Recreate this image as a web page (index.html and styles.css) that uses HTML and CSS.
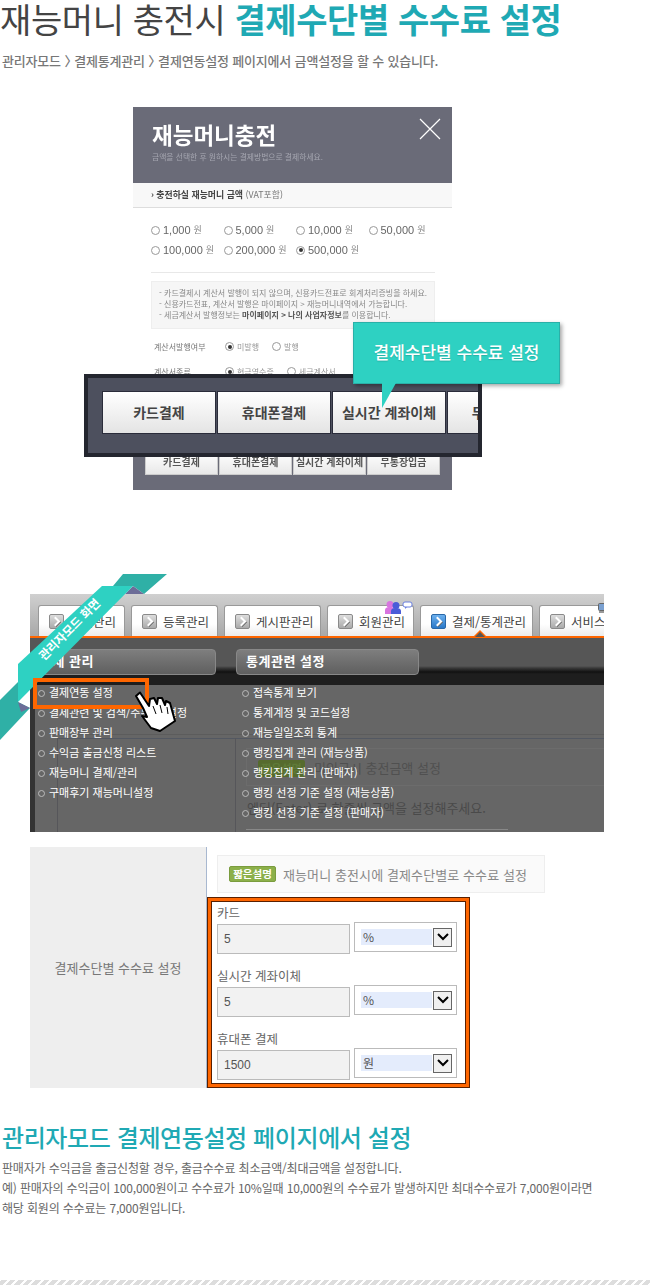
FILE: index.html
```html
<!DOCTYPE html>
<html lang="ko">
<head>
	<meta charset="UTF-8">
	<title>결제수단별 수수료 설정</title>
	<link rel="stylesheet" href="styles.css">
</head>
<body>
	<header class="top">
		<h1>재능머니 충전시 <strong>결제수단별 수수료 설정</strong></h1>
		<p class="crumb">관리자모드 <i>〉</i> 결제통계관리 <i>〉</i> 결제연동설정 페이지에서 금액설정을 할 수 있습니다.</p>
	</header>

	<section class="shot">
		<div class="modal">
			<div class="modal-head">
				<h2>재능머니충전</h2>
				<p>금액을 선택한 후 원하시는 결제방법으로 결제하세요.</p>
				<svg class="close" width="22" height="22" viewBox="0 0 22 22"><path d="M1 1L21 21M21 1L1 21" stroke="#fff" stroke-width="1.2" fill="none"/></svg>
			</div>
			<div class="modal-bar"><b>› 충전하실 재능머니 금액</b> (VAT포함)</div>
			<div class="amounts">
				<label><i class="radio"></i>1,000 <em>원</em></label>
				<label><i class="radio"></i>5,000 <em>원</em></label>
				<label><i class="radio"></i>10,000 <em>원</em></label>
				<label><i class="radio"></i>50,000 <em>원</em></label>
				<label><i class="radio"></i>100,000 <em>원</em></label>
				<label><i class="radio"></i>200,000 <em>원</em></label>
				<label><i class="radio on"></i>500,000 <em>원</em></label>
			</div>
			<div class="note">
				<p>- 카드결제시 계산서 발행이 되지 않으며, 신용카드전표로 회계처리증빙을 하세요.</p>
				<p>- 신용카드전표, 계산서 발행은 마이페이지 &gt; 재능머니내역에서 가능합니다.</p>
				<p>- 세금계산서 발행정보는 <b>마이페이지 &gt; 나의 사업자정보</b>를 이용합니다.</p>
			</div>
			<div class="opt">
				<span class="opt-name">계산서발행여부</span>
				<label class="opt-a"><i class="radio on"></i>미발행</label>
				<label><i class="radio"></i>발행</label>
			</div>
			<div class="opt">
				<span class="opt-name">계산서종류</span>
				<label class="opt-a"><i class="radio on"></i>현금영수증</label>
				<label><i class="radio"></i>세금계산서</label>
			</div>
			<div class="modal-foot">
				<span>카드결제</span><span>휴대폰결제</span><span>실시간 계좌이체</span><span>무통장입금</span>
			</div>
		</div>

		<div class="zoombox">
			<span>카드결제</span><span>휴대폰결제</span><span>실시간 계좌이체</span><span>무통장입금</span>
		</div>
		<div class="callout">결제수단별 수수료 설정</div>
	</section>

	<section class="admin-wrap">
		<div class="admin">
			<nav class="tabs">
				<a class="tab t1"><i class="tico"></i>결제관리</a>
				<a class="tab t2"><i class="tico"></i>등록관리</a>
				<a class="tab t3"><i class="tico"></i>게시판관리</a>
				<a class="tab t4"><i class="tico"></i>회원관리
					<svg class="people" width="28" height="13" viewBox="0 0 28 13">
						<circle cx="5" cy="3.5" r="3.5" fill="#d874e0"/><path d="M0 13V9Q0 6 5 6T10 9V13Z" fill="#d874e0"/>
						<circle cx="11" cy="4.5" r="3.5" fill="#4a5cd8"/><path d="M6 13V10Q6 7 11 7T16 10V13Z" fill="#4a5cd8"/>
						<rect x="18" y="1" width="9" height="5" rx="2" fill="#fff" stroke="#6a80e0"/><path d="M20 6V8L22 6Z" fill="#6a80e0"/>
					</svg>
				</a>
				<a class="tab t5 active"><i class="tico"></i>결제/통계관리<b class="notch"></b></a>
				<a class="tab t6"><i class="tico"></i>서비스관리
					<svg class="monitor" width="16" height="10" viewBox="0 0 16 10"><rect x="0.5" y="0.5" width="14" height="7" rx="1" fill="#7aa0d0" stroke="#666"/><rect x="1" y="8" width="13" height="2" fill="#999"/></svg>
				</a>
			</nav>
			<div class="heads">
				<div class="head h1st">결제 관리</div>
				<div class="head h2nd">통계관련 설정</div>
			</div>
			<div class="menu">
				<div class="ghost">
					<i class="gh g-line1"></i>
					<i class="gh g-line2"></i>
					<i class="gh g-v1"></i>
					<i class="gh g-v2"></i>
					<div class="g-box"><b>짧은설명</b>미입금시 충전금액 설정</div>
					<p class="g-text">엔터(Enter) 로 한줄씩 금액을 설정해주세요.</p>
					<i class="gh g-input"></i>
				</div>
				<ul class="mcol m1">
					<li>결제연동 설정</li>
					<li>결제관련 및 검색/주문 등 설정</li>
					<li>판매장부 관리</li>
					<li>수익금 출금신청 리스트</li>
					<li>재능머니 결제/관리</li>
					<li>구매후기 재능머니설정</li>
				</ul>
				<ul class="mcol m2">
					<li>접속통계 보기</li>
					<li>통계계정 및 코드설정</li>
					<li>재능일일조회 통계</li>
					<li>랭킹집계 관리 (재능상품)</li>
					<li>랭킹집계 관리 (판매자)</li>
					<li>랭킹 선정 기준 설정 (재능상품)</li>
					<li>랭킹 선정 기준 설정 (판매자)</li>
				</ul>
			</div>
		</div>

		<svg class="ribbon" width="200" height="180" viewBox="0 565 200 180">
			<path d="M123 574H167L144 594L133 586H113Z" fill="#2fb0a6"/>
			<path d="M125 594H144L133 586Z" fill="#6d6d98"/>
			<path d="M0 700L18 682V702L30 708L0 740Z" fill="#2fb0a6"/>
			<path d="M18 702L30 708L21 712Z" fill="#6d6d98"/>
			<path d="M102 586H133L18 702V664Z" fill="#2ed1c2"/>
			<text x="0" y="0" transform="translate(44 661) rotate(-45)" class="ribbon-text">관리자모드 화면</text>
			<rect x="35" y="680" width="112" height="27" fill="none" stroke="#f60" stroke-width="4"/>
			<path d="M136 696L140 692.500L149 706L150 699L154 698L157 704L158 698L162 698L165 705L166 701L170 703L175 721L160 731L151 728L142 716L147 717L143 708Z" fill="#fff" stroke="#000" stroke-width="2" stroke-linejoin="round"/>
			<path d="M153 706L156 714M160 705L162 713M167 707L168 714" stroke="#000" stroke-width="1" fill="none"/>
		</svg>
	</section>

	<section class="form">
		<div class="form-name">결제수단별 수수료 설정</div>
		<div class="form-body">
			<div class="desc"><b class="badge">짧은설명</b>재능머니 충전시에 결제수단별로 수수료 설정</div>
			<div class="fields">
				<div class="field">
					<label>카드</label>
					<div class="field-row"><div class="input">5</div><div class="sel"><span>%</span><i class="sel-btn"><svg width="12" height="8" viewBox="0 0 12 8"><path d="M1 1L6 6L11 1" stroke="#000" stroke-width="2" fill="none"/></svg></i></div></div>
				</div>
				<div class="field">
					<label>실시간 계좌이체</label>
					<div class="field-row"><div class="input">5</div><div class="sel"><span>%</span><i class="sel-btn"><svg width="12" height="8" viewBox="0 0 12 8"><path d="M1 1L6 6L11 1" stroke="#000" stroke-width="2" fill="none"/></svg></i></div></div>
				</div>
				<div class="field">
					<label>휴대폰 결제</label>
					<div class="field-row"><div class="input">1500</div><div class="sel"><span>원</span><i class="sel-btn"><svg width="12" height="8" viewBox="0 0 12 8"><path d="M1 1L6 6L11 1" stroke="#000" stroke-width="2" fill="none"/></svg></i></div></div>
				</div>
			</div>
		</div>
	</section>

	<section class="foot-text">
		<h3>관리자모드 결제연동설정 페이지에서 설정</h3>
		<p>판매자가 수익금을 출금신청할 경우, 출금수수료 최소금액/최대금액을 설정합니다.</p>
		<p>예) 판매자의 수익금이 100,000원이고 수수료가 10%일때 10,000원의 수수료가 발생하지만 최대수수료가 7,000원이라면</p>
		<p>해당 회원의 수수료는 7,000원입니다.</p>
	</section>

	<div class="stripes"></div>
</body>
</html>
```

FILE: styles.css
```css
* {
	box-sizing: border-box;
}
html, body {
	margin: 0;
	padding: 0;
}
body {
	width: 650px;
	height: 1285px;
	overflow: hidden;
	display: flex;
	flex-direction: column;
	background: #fff;
	font-family: "Noto Sans CJK KR", "Noto Sans", sans-serif;
	color: #444;
}
p, h1, h2, h3, ul {
	margin: 0;
	padding: 0;
}
i, em {
	font-style: normal;
}

/* title */
.top {
	height: 107px;
	flex: none;
}
h1 {
	font-size: 34px;
	line-height: 38px;
	font-weight: 400;
	letter-spacing: -0.4px;
	color: #444;
	white-space: nowrap;
}
h1 strong {
	font-weight: 700;
	color: #1fa9b4;
}
.crumb {
	margin-top: 14px;
	padding-left: 2px;
	font-size: 13px;
	line-height: 18px;
	font-weight: 500;
	letter-spacing: -0.18px;
	color: #777;
	white-space: nowrap;
}
.crumb i {
	display: inline-block;
	margin-right: -6.500px;
}

/* payment popup */
.shot {
	position: relative;
	height: 383px;
	flex: none;
}
.modal {
	width: 319px;
	height: 383px;
	margin-left: 133px;
	filter: blur(0.35px);
	overflow: hidden;
}
.modal-head {
	position: relative;
	height: 76px;
	padding: 14px 0 0 19px;
	background: #6a6b78;
	color: #fff;
}
.modal-head h2 {
	font-size: 22.500px;
	line-height: 26px;
	font-weight: 700;
}
.modal-head p {
	margin-top: 5px;
	font-size: 7.800px;
	line-height: 10px;
	color: #a5a6b0;
}
.close {
	position: absolute;
	top: 11px;
	right: 11px;
}
.modal-bar {
	height: 25px;
	padding-left: 18px;
	background: #f8f8f8;
	border-bottom: 1px solid #ddd;
	font-size: 8.900px;
	line-height: 24px;
	color: #777;
}
.modal-bar b {
	color: #444;
}
.amounts {
	display: grid;
	grid-template-columns: repeat(4, 72.500px);
	grid-auto-rows: 19.500px;
	height: 65px;
	margin: 0 17px 0 18px;
	padding-top: 13px;
	border-bottom: 1px solid #e8e8e8;
	font-size: 11px;
	line-height: 19px;
	color: #666;
	font-family: "Liberation Sans", "Noto Sans CJK KR", sans-serif;
}
.amounts label {
	display: flex;
	align-items: center;
	white-space: pre;
}
.amounts em {
	font-size: 9px;
	color: #888;
}
.radio {
	flex: none;
	position: relative;
	width: 9px;
	height: 9px;
	margin-right: 3px;
	border: 1px solid #999;
	border-radius: 50%;
	background: #fff;
}
.radio.on::after {
	content: "";
	position: absolute;
	left: 1.500px;
	top: 1.500px;
	width: 4px;
	height: 4px;
	border-radius: 50%;
	background: #333;
}
.note {
	height: 48px;
	margin: 8px 17px 0 18px;
	padding: 5px 7px;
	background: #f6f6f6;
	border: 1px solid #eee;
	font-size: 8px;
	line-height: 11px;
	color: #888;
	white-space: nowrap;
}
.note b {
	color: #555;
}
.opt {
	display: flex;
	align-items: center;
	height: 25px;
	margin-left: 21px;
	font-size: 8px;
	color: #777;
	white-space: nowrap;
}
.note + .opt {
	margin-top: 5px;
}
.opt-name {
	width: 71px;
}
.opt label {
	display: flex;
	align-items: center;
	color: #999;
}
.opt-a {
	margin-right: 13px;
}
.modal-foot {
	display: flex;
	gap: 1px;
	height: 106px;
	padding: 67px 11px 15px 12px;
	background: linear-gradient(#fff 50px, #6a6b78 50px);
}
.modal-foot span {
	width: 73px;
	height: 24px;
	background: linear-gradient(#fff, #e8e8e8);
	border: 1px solid #ccc;
	font-size: 10px;
	font-weight: 700;
	line-height: 20px;
	text-align: center;
	color: #555;
	white-space: nowrap;
}

.zoombox {
	position: absolute;
	left: 84px;
	top: 267px;
	width: 398px;
	height: 83px;
	display: flex;
	gap: 1px;
	padding: 13px 0 0 14px;
	background: #4d505e;
	border: 4px solid #24262f;
	overflow: hidden;
}
.zoombox span {
	flex: none;
	width: 114px;
	height: 43px;
	background: linear-gradient(#fff, #e4e4e4);
	border: 1px solid #2a2c3a;
	font-size: 14px;
	font-weight: 700;
	line-height: 40px;
	text-align: center;
	color: #444;
	white-space: nowrap;
}
.callout {
	position: absolute;
	left: 353px;
	top: 215px;
	width: 207px;
	height: 62px;
	background: #2ed1c2;
	border: 1px solid #2ab0a8;
	box-shadow: 2px 2px 4px rgba(0, 0, 0, 0.35);
	font-size: 17px;
	font-weight: 500;
	line-height: 58px;
	text-align: center;
	color: #fff;
	text-shadow: 0 1px 1px rgba(0, 0, 0, 0.15);
}
.callout::after {
	content: "";
	position: absolute;
	left: 28px;
	top: 60px;
	width: 14px;
	height: 25px;
	background: #2ed1c2;
	clip-path: polygon(0 0, 100% 0, 0 100%);
}

/* admin capture */
.admin-wrap {
	position: relative;
	flex: none;
	height: 238px;
	margin-top: 104px;
}
.admin {
	width: 574px;
	height: 238px;
	margin-left: 30px;
	overflow: hidden;
	background: #666;
}
.tabs {
	display: flex;
	gap: 6px;
	height: 44px;
	padding: 11px 0 0 8px;
	background: linear-gradient(#d0d0d0, #a8a8a8);
	border-bottom: 2px solid #f60;
	white-space: nowrap;
}
.tab {
	position: relative;
	flex: none;
	display: flex;
	align-items: center;
	height: 31px;
	padding-left: 10px;
	background: linear-gradient(#fff 60%, #ececec);
	border: 1px solid #999;
	border-bottom: 0;
	border-radius: 3px 3px 0 0;
	font-size: 12.500px;
	color: #444;
}
.t1 { width: 87px; }
.t2 { width: 87px; }
.t3 { width: 97px; }
.t4 { width: 87px; }
.t5 { width: 113px; }
.t6 { width: 110px; }
.tico {
	flex: none;
	position: relative;
	width: 15px;
	height: 15px;
	margin-right: 6px;
	background: linear-gradient(#ddd, #aaa);
	border: 1px solid #8a8a8a;
	border-radius: 2px;
}
.tico::after {
	content: "";
	position: absolute;
	left: 2px;
	top: 3px;
	width: 5px;
	height: 5px;
	border-top: 2px solid #fff;
	border-right: 2px solid #fff;
	transform: rotate(45deg);
	filter: drop-shadow(1px 0 0 #666);
}
.active .tico {
	background: linear-gradient(#6cb0ee, #2a78c8);
	border-color: #2a68a8;
}
.notch {
	position: absolute;
	left: 52px;
	bottom: -1px;
	width: 14px;
	height: 7px;
	background: #f60;
	clip-path: polygon(50% 0, 100% 100%, 0 100%);
}
.notch::after {
	content: "";
	position: absolute;
	left: 2px;
	top: 2px;
	width: 10px;
	height: 5px;
	background: #555;
	clip-path: polygon(50% 0, 100% 100%, 0 100%);
}
.people {
	position: absolute;
	top: -5px;
	left: 57px;
}
.monitor {
	position: absolute;
	top: -3px;
	left: 58px;
}
.heads {
	display: flex;
	gap: 20px;
	height: 47px;
	padding: 11px 0 0 6px;
	background: linear-gradient(#565656 28px, #3a3a3a 30px, #111 34px, #1e1e1e 36px);
}
.head {
	height: 26px;
	padding-left: 9px;
	background: linear-gradient(#7e7e7e, #5f5f5f);
	border: 1px solid #888;
	border-radius: 4px;
	font-size: 13px;
	font-weight: 700;
	letter-spacing: 0.5px;
	line-height: 22px;
	color: #fff;
}
.h1st {
	width: 180px;
	padding-left: 3px;
}
.h2nd {
	width: 183px;
}
.menu {
	position: relative;
	display: flex;
	height: 147px;
	border-left: 5px solid #333;
}
.mcol {
	position: relative;
	display: flex;
	flex-direction: column;
	gap: 6px;
	list-style: none;
	font-size: 11px;
	line-height: 14px;
	color: #fff;
	white-space: nowrap;
}
.mcol li {
	position: relative;
	padding-left: 14px;
}
.mcol li::before {
	content: "";
	position: absolute;
	left: 3px;
	top: 5px;
	width: 5px;
	height: 5px;
	border: 1px solid #bbb;
	border-radius: 50%;
}
.m1 {
	width: 204px;
}
.ghost {
	position: absolute;
	inset: 0;
}
.gh {
	position: absolute;
	background: #56565a;
}
.g-line1 { left: 22px; right: 0; top: 49px; height: 1px; background: #5c5c5c; }
.g-line2 { left: 22px; right: 0; top: 53px; height: 1px; background: #535862; }
.g-v1 { left: 22px; top: 53px; width: 1px; bottom: 0; }
.g-v2 { left: 200px; top: 53px; width: 1px; bottom: 0; }
.g-input {
	left: 211px;
	top: 144px;
	width: 262px;
	height: 3px;
	background: none;
	border-top: 1px solid #888;
}
.g-box {
	position: absolute;
	left: 211px;
	top: 63px;
	width: 360px;
	height: 38px;
	padding: 10px 0 0 11px;
	border: 1px solid #6c6c6c;
	font-size: 13px;
	line-height: 17px;
	color: #505050;
	white-space: nowrap;
}
.g-box b {
	display: inline-block;
	width: 47px;
	margin-right: 9px;
	background: #566b2e;
	border-radius: 2px;
	font-size: 11px;
	text-align: center;
	color: #5f7a38;
}
.g-text {
	position: absolute;
	left: 212px;
	top: 114px;
	font-size: 13px;
	line-height: 18px;
	color: #4a4a4a;
	white-space: nowrap;
}
.ribbon {
	position: absolute;
	left: 0;
	top: -29px;
}
.ribbon-text {
	font-size: 12px;
	font-weight: 700;
	fill: #fff;
}

/* fee form */
.form {
	flex: none;
	display: flex;
	height: 241px;
	margin: 15px 0 0 30px;
}
.form-name {
	width: 177px;
	background: #eee;
	border-right: 1px solid #a8b8d0;
	font-size: 13px;
	line-height: 241px;
	text-align: center;
	color: #777;
}
.form-body {
	width: 338px;
}
.desc {
	display: flex;
	align-items: center;
	width: 328px;
	height: 38px;
	margin: 8px 0 4px 10px;
	padding-left: 11px;
	background: #fafafa;
	border: 1px solid #eee;
	font-size: 13px;
	letter-spacing: 0.1px;
	color: #888;
	white-space: nowrap;
}
.badge {
	width: 47px;
	height: 16px;
	margin-right: 7px;
	background: #8cb04a;
	border: 1px solid #7a9c3e;
	border-radius: 2px;
	font-size: 10.500px;
	letter-spacing: 0;
	line-height: 14px;
	text-align: center;
	color: #fff;
}
.fields {
	display: flex;
	flex-direction: column;
	gap: 14px;
	width: 263px;
	height: 191px;
	padding: 4px 0 0 6px;
	background: #fff;
	border: 4px solid #f60;
	outline: 1px solid #5a2000;
	outline-offset: -1px;
	box-shadow: inset 0 0 0 1px #5a2000;
}
.field label {
	display: block;
	height: 16px;
	margin-bottom: 3px;
	font-size: 12.500px;
	line-height: 16px;
	color: #666;
}
.field-row {
	display: flex;
	gap: 4px;
}
.input {
	width: 133px;
	height: 30px;
	padding-left: 6px;
	background: #f2f2f2;
	border: 1px solid #bbb;
	font-family: "Liberation Sans", sans-serif;
	font-size: 12px;
	line-height: 28px;
	color: #555;
}
.sel {
	display: flex;
	align-items: center;
	gap: 1px;
	width: 103px;
	height: 30px;
	margin-top: -2px;
	padding-left: 6px;
	background: #fff;
	border: 1px solid #bbb;
	font-size: 12px;
	color: #555;
}
.sel span {
	width: 71px;
	height: 16px;
	padding-left: 2px;
	background: #e4ecfc;
	line-height: 16px;
}
.sel-btn {
	display: flex;
	align-items: center;
	justify-content: center;
	width: 19px;
	height: 19px;
	background: #f0f0f0;
	border: 1px solid #666;
}

/* bottom text */
.foot-text {
	flex: none;
	margin-top: 33px;
	padding-left: 2px;
	font-size: 12px;
	line-height: 20px;
	letter-spacing: -0.17px;
	color: #666;
	white-space: nowrap;
}
.foot-text h3 {
	height: 31px;
	margin-bottom: 6px;
	font-size: 24px;
	line-height: 32px;
	font-weight: 500;
	letter-spacing: -0.4px;
	color: #1fa9b4;
}
.stripes {
	flex: none;
	height: 5px;
	margin-top: auto;
	background: repeating-linear-gradient(-45deg, #fff 0 2px, #ddd 2px 6px);
}
```
